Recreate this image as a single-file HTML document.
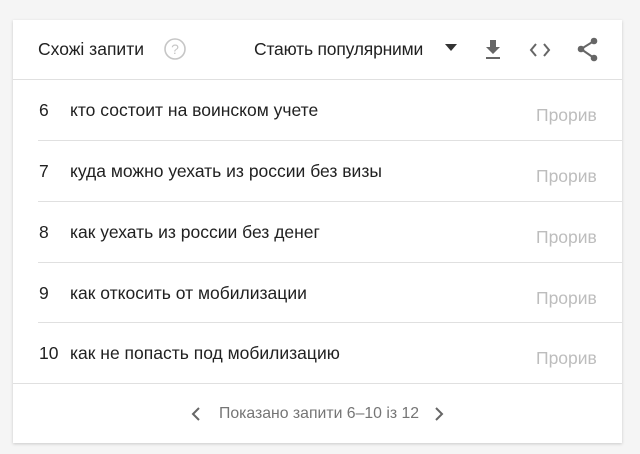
<!DOCTYPE html>
<html><head><meta charset="utf-8"><style>
body{margin:0;width:640px;height:454px;background:#f5f5f5;font-family:"Liberation Sans",sans-serif;position:relative;overflow:hidden}
.card{position:absolute;left:13px;top:20px;width:609px;height:423px;background:#fff;box-shadow:0 1px 3px rgba(0,0,0,.18)}
.t{position:absolute;white-space:nowrap}
.hl{position:absolute;height:1px;background:#e0e0e0}
.row{font-size:17.5px;color:#212121}
.pr{color:#bdbdbd;font-size:17.5px}
</style></head><body>
<div class="card">
<div class="t" style="left:25px;top:19px;font-size:17.5px;color:#212121">Схожі запити</div>
<svg style="position:absolute;left:150px;top:17px" width="24" height="24" viewBox="0 0 24 24"><circle cx="12" cy="12" r="10" fill="none" stroke="#c6c6c6" stroke-width="1.6"/><text x="12" y="17" text-anchor="middle" font-size="14" fill="#c6c6c6" font-family="Liberation Sans">?</text></svg>
<div class="t" style="left:241px;top:19px;font-size:17.5px;color:#212121;letter-spacing:-0.2px">Стають популярними</div>
<svg style="position:absolute;left:432px;top:24px" width="12" height="8"><path d="M0 0H12L6 7Z" fill="#333"/></svg>
<svg style="position:absolute;left:470px;top:18px" width="20" height="24" viewBox="0 0 20 24"><path d="M7 2h6v7h4l-7 7-7-7h4z" fill="#666"/><rect x="3" y="19" width="14" height="2" fill="#666"/></svg>
<svg style="position:absolute;left:515px;top:20px" width="24" height="20" viewBox="0 0 24 20"><path d="M8 4L3 10l5 6M16 4l5 6-5 6" fill="none" stroke="#666" stroke-width="2"/></svg>
<svg style="position:absolute;left:563px;top:16px" width="24" height="28" viewBox="0 0 24 28"><circle cx="18" cy="5" r="3.3" fill="#666"/><circle cx="5" cy="13" r="3.3" fill="#666"/><circle cx="18" cy="22" r="3.3" fill="#666"/><path d="M18 5L5 13l13 9" fill="none" stroke="#666" stroke-width="2"/></svg>
<div class="hl" style="left:0;top:59px;width:609px"></div>

<div class="t row" style="left:26px;top:80px">6</div><div class="t row" style="left:57px;top:80px">кто состоит на воинском учете</div><div class="t pr" style="left:523px;top:85px">Прорив</div>
<div class="hl" style="left:25px;top:120px;width:584px"></div>
<div class="t row" style="left:26px;top:141px">7</div><div class="t row" style="left:57px;top:141px">куда можно уехать из россии без визы</div><div class="t pr" style="left:523px;top:146px">Прорив</div>
<div class="hl" style="left:25px;top:181px;width:584px"></div>
<div class="t row" style="left:26px;top:202px">8</div><div class="t row" style="left:57px;top:202px">как уехать из россии без денег</div><div class="t pr" style="left:523px;top:207px">Прорив</div>
<div class="hl" style="left:25px;top:242px;width:584px"></div>
<div class="t row" style="left:26px;top:263px">9</div><div class="t row" style="left:57px;top:263px">как откосить от мобилизации</div><div class="t pr" style="left:523px;top:268px">Прорив</div>
<div class="hl" style="left:25px;top:302px;width:584px"></div>
<div class="t row" style="left:26px;top:323px">10</div><div class="t row" style="left:57px;top:323px">как не попасть под мобилизацию</div><div class="t pr" style="left:523px;top:328px">Прорив</div>
<div class="hl" style="left:0;top:363px;width:609px"></div>

<svg style="position:absolute;left:178px;top:387px" width="10" height="14"><path d="M8 1L2 7l6 6" fill="none" stroke="#666" stroke-width="2"/></svg>
<div class="t" style="left:206px;top:385px;font-size:15.8px;color:#757575">Показано запити 6–10 із 12</div>
<svg style="position:absolute;left:421px;top:387px" width="10" height="14"><path d="M2 1l6 6-6 6" fill="none" stroke="#666" stroke-width="2"/></svg>
</div>
</body></html>
